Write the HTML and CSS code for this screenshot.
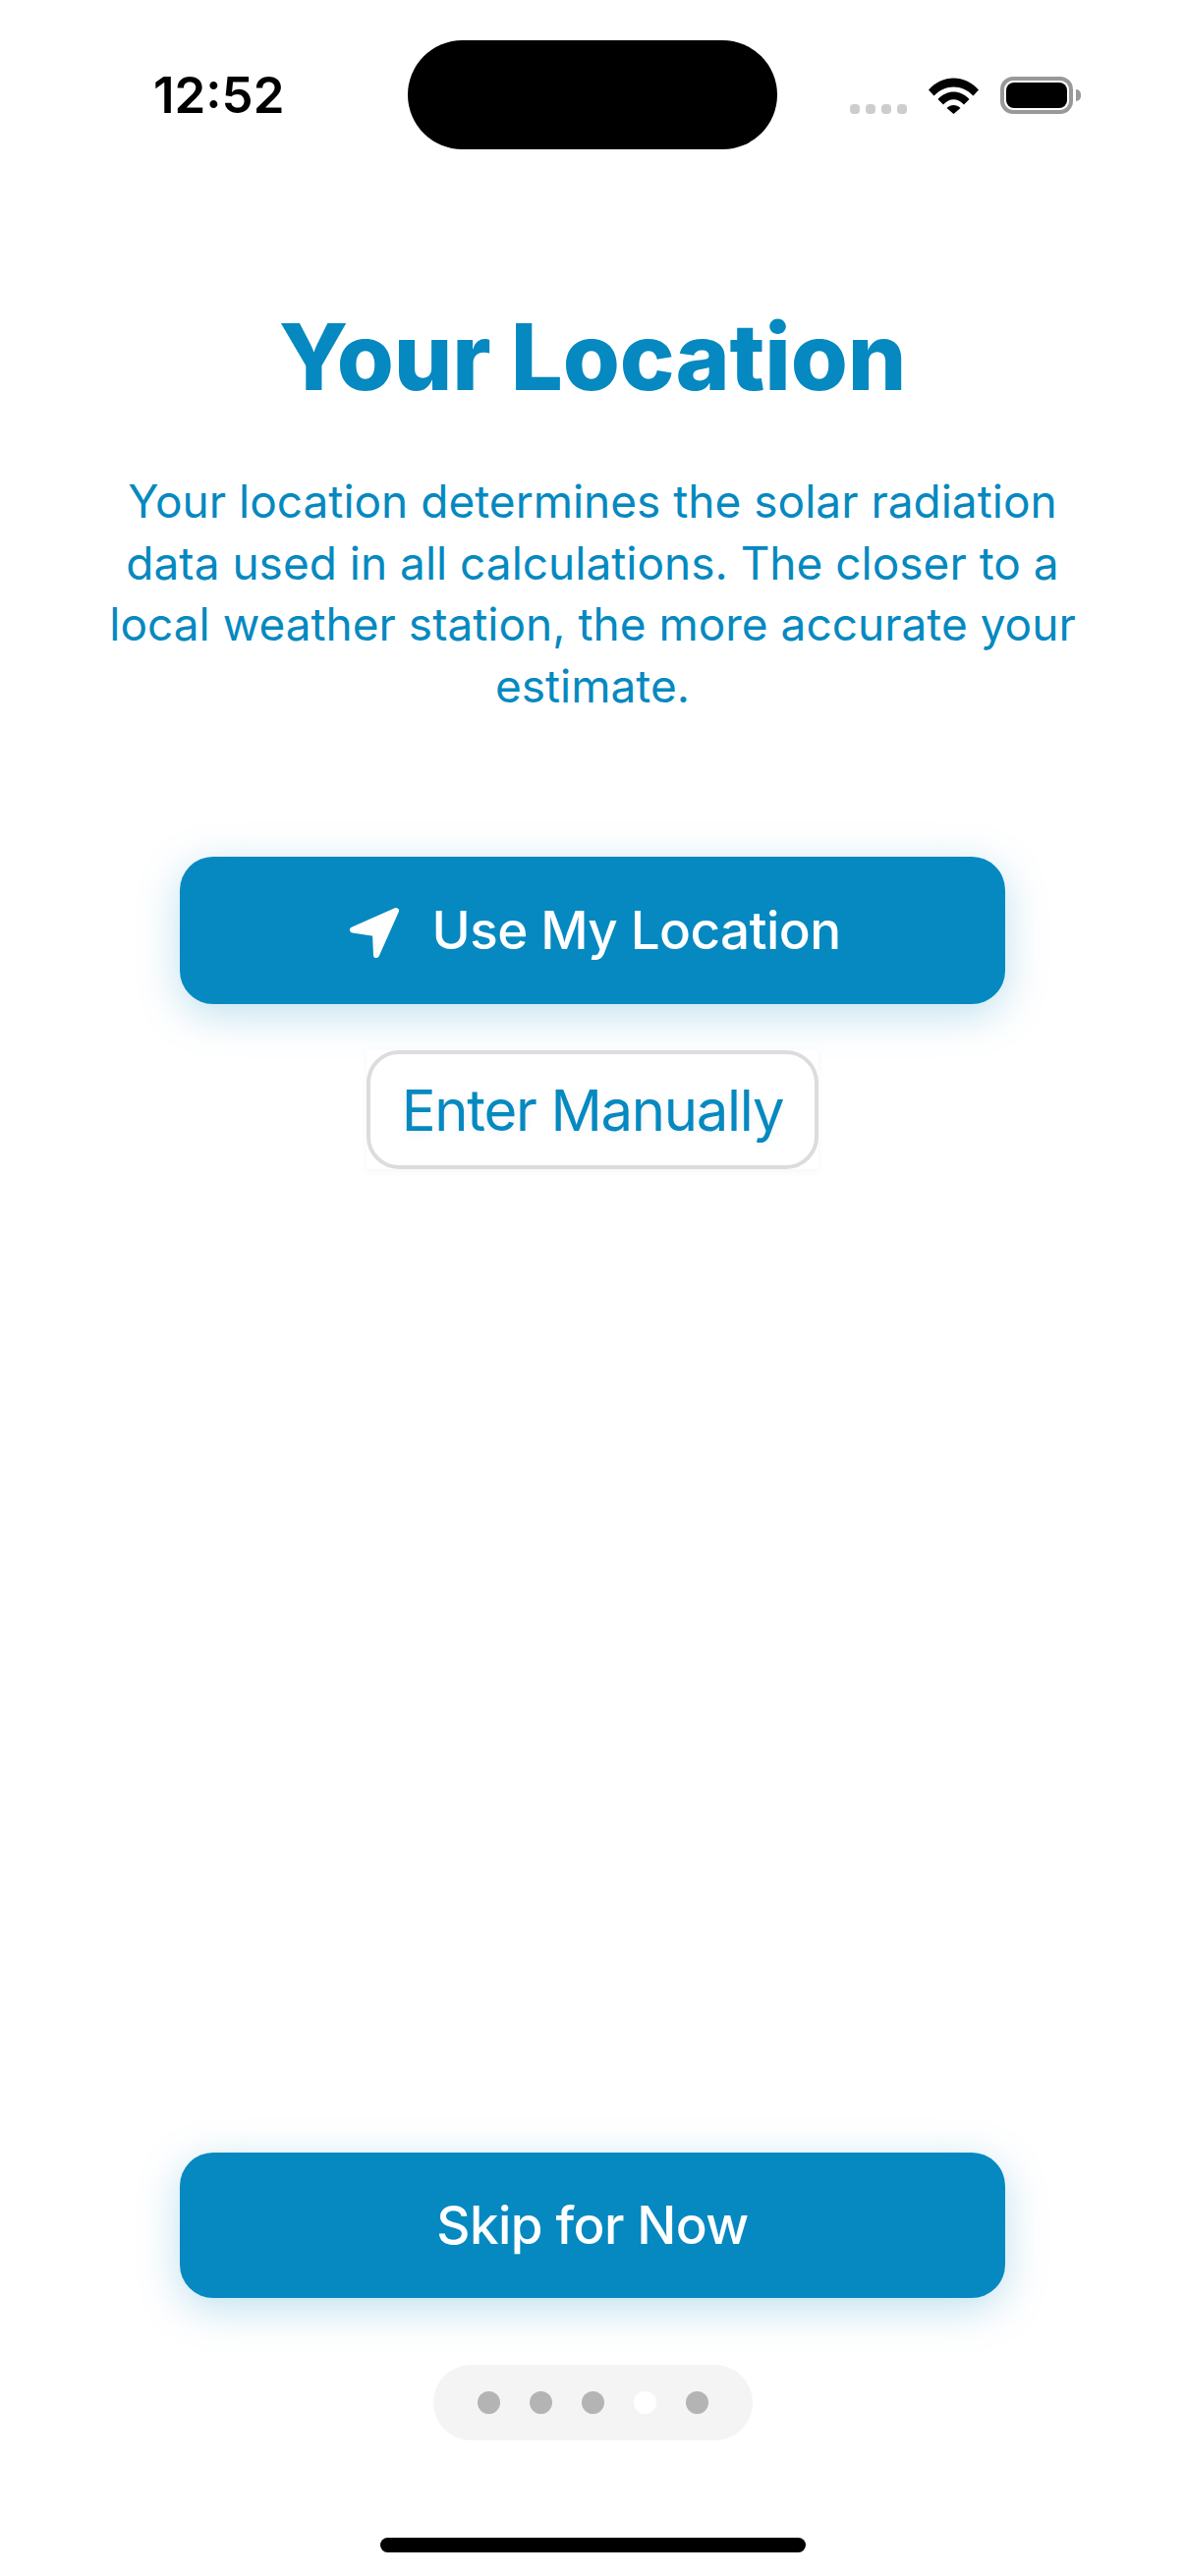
FILE: index.html
```html
<!DOCTYPE html>
<html lang="en">
<head>
<meta charset="utf-8">
<title>Your Location</title>
<link rel="stylesheet" href="styles.css">
</head>
<body>
<main class="screen">
  <header class="status">
    <span class="time">12:52</span>
    <div class="island"></div>
    <div class="indicators">
      <div class="signal"><i></i><i></i><i></i><i></i></div>
      <svg class="wifi" viewBox="0 0 51 37" aria-hidden="true">
        <path d="M0 12.500C14-3.500 37-3.500 51 12.500L45.500 18.500C34 6.500 17 6.500 5.500 18.500Z"/>
        <path d="M9.500 22C18.500 12 32.500 12 41.500 22L36 27.500C29.500 20.500 21.500 20.500 15 27.500Z"/>
        <path d="M18.500 31C22.500 27 28.500 27 32.500 31L25.500 37Z"/>
      </svg>
      <div class="battery"><div class="battery-body"><div class="battery-fill"></div></div><div class="battery-cap"></div></div>
    </div>
  </header>

  <section class="intro">
    <h1 class="title">Your Location</h1>
    <p class="lead">Your location determines the solar radiation data used in all calculations. The closer to a local weather station, the more accurate your estimate.</p>
  </section>

  <section class="actions">
    <button class="btn-primary" type="button">
      <svg class="arrow" viewBox="0 0 56 56" aria-hidden="true"><path d="M52 8L8 27.500L31 31L32 53Z"/></svg>
      <span>Use My Location</span>
    </button>
    <div class="secondary-wrap"><button class="btn-secondary" type="button">Enter Manually</button></div>
  </section>

  <footer class="bottom">
    <button class="btn-primary btn-skip" type="button"><span>Skip for Now</span></button>
    <div class="pager"><i></i><i></i><i></i><i class="current"></i><i></i></div>
    <div class="home-bar"></div>
  </footer>
</main>
</body>
</html>
```
FILE: styles.css
```css
* { box-sizing: border-box; }
html, body { margin: 0; padding: 0; background: #fff; }
.screen {
  width: 1206px;
  height: 2622px;
  display: flex;
  flex-direction: column;
  align-items: center;
  font-family: Inter, "Liberation Sans", sans-serif;
  color: #0589c0;
  overflow: hidden;
}
.status {
  width: 100%;
  height: 152px;
  padding-top: 41px;
  display: grid;
  grid-template-columns: 415px 376px 415px;
}
.time {
  font-size: 51px;
  font-weight: 600;
  line-height: 60px;
  color: #000;
  padding-left: 156px;
  padding-top: 26px;
}
.island { width: 376px; height: 111px; background: #000; border-radius: 56px; }
.indicators { display: flex; align-items: flex-start; padding: 37px 0 0 74px; }
.signal { display: flex; gap: 6px; margin-top: 28px; }
.signal i { width: 10px; height: 10px; border-radius: 4px; background: #cdcdcd; }
.wifi { width: 51px; height: 37px; margin: 1px 0 0 22px; fill: #000; }
.battery { display: flex; align-items: center; margin-left: 22px; }
.battery-body { width: 74px; height: 38px; border: 4px solid #999; border-radius: 13px; padding: 2px; }
.battery-fill { width: 100%; height: 100%; background: #000; border-radius: 8px; }
.battery-cap { width: 5px; height: 12px; margin-left: 3px; background: #999; border-radius: 0 6px 6px 0; }
.intro { width: 100%; display: flex; flex-direction: column; align-items: center; }
.title { margin: 153px 0 0; font-size: 94px; line-height: 116px; font-weight: 800; letter-spacing: -0.200px; }
.lead { margin: 58px 0 0; width: 1000px; font-size: 46px; line-height: 62.500px; text-align: center; }
.actions { margin-top: 143px; display: flex; flex-direction: column; align-items: center; }
.btn-primary {
  width: 840px;
  height: 150px;
  display: flex;
  align-items: center;
  justify-content: center;
  gap: 33px;
  border: 0;
  border-radius: 34px;
  background: #0589c0;
  color: #fff;
  font: 500 53px Inter, "Liberation Sans", sans-serif;
  letter-spacing: -0.600px;
  box-shadow: 0 10px 44px rgba(5, 137, 192, 0.26);
}
.btn-skip { height: 148px; }
.arrow { width: 56px; height: 56px; fill: #fff; stroke: #fff; stroke-width: 6px; stroke-linejoin: round; }
.secondary-wrap { margin-top: 47px; background: #fff; box-shadow: 0 2px 8px rgba(0, 0, 0, 0.04); }
.btn-secondary {
  display: block;
  width: 460px;
  height: 121px;
  border: 4px solid #dcdcdc;
  border-radius: 33px;
  background: #fff;
  color: #0589c0;
  font: 400 58px Inter, "Liberation Sans", sans-serif;
  letter-spacing: -1.300px;
  text-shadow: 0 2px 8px rgba(0, 0, 0, 0.06);
  padding: 0;
}
.bottom { margin-top: auto; display: flex; flex-direction: column; align-items: center; padding-bottom: 24px; }
.pager {
  margin-top: 68px;
  width: 325px;
  height: 77px;
  display: flex;
  align-items: center;
  justify-content: center;
  gap: 30px;
  border-radius: 39px;
  background: #f4f4f4;
}
.pager i { width: 23px; height: 23px; border-radius: 50%; background: #b4b4b4; }
.pager .current { background: #fff; }
.home-bar { margin-top: 99px; width: 433px; height: 15px; border-radius: 8px; background: #000; }
```
